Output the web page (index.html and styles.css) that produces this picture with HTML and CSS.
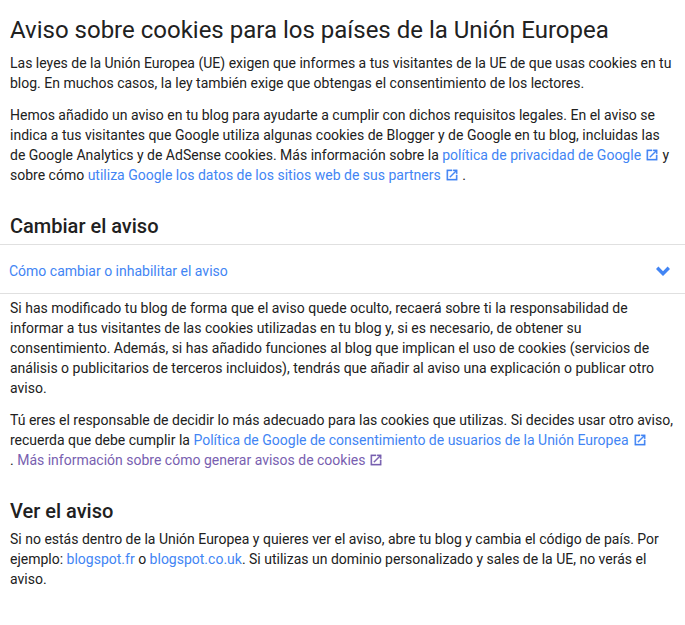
FILE: index.html
```html
<!DOCTYPE html>
<html lang="es">
<head>
    <meta charset="UTF-8">
    <title>Aviso sobre cookies</title>
    <link rel="stylesheet" href="styles.css">
</head>
<body>
    <div class="article">
        <h1>Aviso sobre cookies para los países de la Unión Europea</h1>
        <p>Las leyes de la Unión Europea (UE) exigen que informes a tus visitantes de la UE de que usas cookies en tu blog. En muchos casos, la ley también exige que obtengas el consentimiento de los lectores.</p>
        <p>Hemos añadido un aviso en tu blog para ayudarte a cumplir con dichos requisitos legales. En el aviso se indica a tus visitantes que Google utiliza algunas cookies de Blogger y de Google en tu blog, incluidas las de Google Analytics y de AdSense cookies. Más información sobre la <a href="#">política de privacidad de Google<svg class="ext" viewBox="0 0 24 24"><path d="M19 19H5V5h7V3H3v18h18v-9h-2zM14 3v2h3.6l-9.8 9.8 1.4 1.4L19 6.4V10h2V3z"/></svg></a> y sobre cómo <a href="#">utiliza Google los datos de los sitios web de sus partners<svg class="ext" viewBox="0 0 24 24"><path d="M19 19H5V5h7V3H3v18h18v-9h-2zM14 3v2h3.6l-9.8 9.8 1.4 1.4L19 6.4V10h2V3z"/></svg></a> .</p>

        <h2>Cambiar el aviso</h2>
        <div class="accordion">
            <a href="#">Cómo cambiar o inhabilitar el aviso</a>
            <svg class="chevron" viewBox="0 0 24 24"><path d="M7.4 7.6 12 12.2l4.6-4.6L19 10l-7 7-7-7z"/></svg>
        </div>
        <p>Si has modificado tu blog de forma que el aviso quede oculto, recaerá sobre ti la responsabilidad de informar a tus visitantes de las cookies utilizadas en tu blog y, si es necesario, de obtener su consentimiento. Además, si has añadido funciones al blog que implican el uso de cookies (servicios de análisis o publicitarios de terceros incluidos), tendrás que añadir al aviso una explicación o publicar otro aviso.</p>
        <p>Tú eres el responsable de decidir lo más adecuado para las cookies que utilizas. Si decides usar otro aviso, recuerda que debe cumplir la <a href="#">Política de Google de consentimiento de usuarios de la Unión Europea<svg class="ext" viewBox="0 0 24 24"><path d="M19 19H5V5h7V3H3v18h18v-9h-2zM14 3v2h3.6l-9.8 9.8 1.4 1.4L19 6.4V10h2V3z"/></svg></a><br>. <a class="visited" href="#">Más información sobre cómo generar avisos de cookies<svg class="ext" viewBox="0 0 24 24"><path d="M19 19H5V5h7V3H3v18h18v-9h-2zM14 3v2h3.6l-9.8 9.8 1.4 1.4L19 6.4V10h2V3z"/></svg></a></p>

        <h2>Ver el aviso</h2>
        <p>Si no estás dentro de la Unión Europea y quieres ver el aviso, abre tu blog y cambia el código de país. Por ejemplo: <a href="#">blogspot.fr</a> o <a href="#">blogspot.co.uk</a>. Si utilizas un dominio personalizado y sales de la UE, no verás el aviso.</p>
    </div>
</body>
</html>
```

FILE: styles.css
```css
body {
    margin: 0;
    background: #fff;
    font-family: Roboto, "Liberation Sans", Arial, sans-serif;
    font-size: 14px;
    line-height: 20px;
    color: #212121;
}
.article {
    padding: 14px 10px 0;
}
h1 {
    margin: 0 0 7px;
    font-size: 24px;
    line-height: 32px;
    font-weight: 400;
}
h2 {
    margin: 27px 0 4px;
    font-size: 20px;
    line-height: 28px;
    font-weight: 500;
}
p {
    margin: 0 0 12px;
}
a {
    color: #4285f4;
    text-decoration: none;
}
a.visited {
    color: #7860b0;
}
.ext {
    width: 14px;
    height: 14px;
    margin-left: 4px;
    vertical-align: -2px;
    fill: currentColor;
    stroke: currentColor;
    stroke-width: 0.6;
}
.accordion {
    display: flex;
    justify-content: space-between;
    align-items: center;
    margin: 0 -10px 4px;
    padding: 4px 10px 0 9px;
    height: 44px;
    border-top: 1px solid #e0e0e0;
    border-bottom: 1px solid #e0e0e0;
}
.chevron {
    width: 24px;
    height: 24px;
    fill: #4285f4;
}
```
